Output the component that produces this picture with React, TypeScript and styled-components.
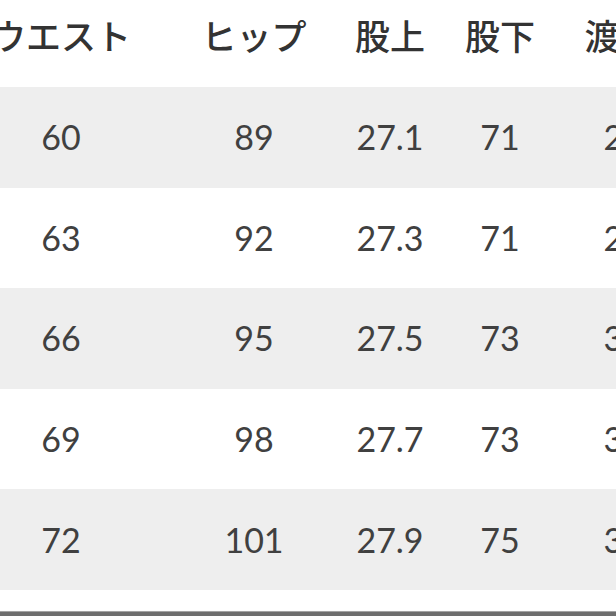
import React from 'react';
import styled, { createGlobalStyle } from 'styled-components';

const GlobalStyle = createGlobalStyle`
  html, body {
    margin: 0;
    padding: 0;
    background: #ffffff;
  }
`;

const Frame = styled.div`
  width: 616px;
  height: 616px;
  overflow: hidden;
  background: #ffffff;
  display: flex;
  flex-direction: column;
`;

const Table = styled.table`
  margin-left: -40px;
  border-collapse: collapse;
  table-layout: fixed;
  width: 748px;
  flex-shrink: 0;
`;

const HeadCell = styled.th`
  height: 87px;
  padding: 0 0 35px 0;
  box-sizing: border-box;
  font-family: 'Noto Sans CJK JP', 'Noto Sans', sans-serif;
  font-weight: 500;
  font-size: 35px;
  line-height: 1;
  color: #333333;
  text-align: center;
  white-space: nowrap;
  vertical-align: bottom;
`;

const Row = styled.tr<{ $shaded: boolean }>`
  height: 100.6px;
  background: ${(p) => (p.$shaded ? '#eeeeee' : '#ffffff')};
`;

const Cell = styled.td`
  padding: 0;
  font-family: Lato, 'Liberation Sans', sans-serif;
  font-weight: 400;
  font-size: 34px;
  line-height: 1;
  color: #404040;
  text-align: center;
  vertical-align: middle;
  white-space: nowrap;
`;

const Gap = styled.div`
  height: 21px;
  flex-shrink: 0;
`;

const BottomRule = styled.div`
  height: 4px;
  border-top: 1px solid #a4a4a4;
  background: #6e6e6e;
  flex-shrink: 0;
`;

const columns = [202, 184, 88, 132, 142];
const headers = ['ウエスト', 'ヒップ', '股上', '股下', '渡り幅'];
const rows = [
  ['60', '89', '27.1', '71', '25.5'],
  ['63', '92', '27.3', '71', '26.5'],
  ['66', '95', '27.5', '73', '30.5'],
  ['69', '98', '27.7', '73', '31.5'],
  ['72', '101', '27.9', '75', '32.5'],
];

export default function App() {
  return (
    <Frame>
      <GlobalStyle />
      <Table>
        <colgroup>
          {columns.map((w, i) => (
            <col key={i} style={{ width: w }} />
          ))}
        </colgroup>
        <thead>
          <tr>
            {headers.map((h) => (
              <HeadCell key={h}>{h}</HeadCell>
            ))}
          </tr>
        </thead>
        <tbody>
          {rows.map((r, i) => (
            <Row key={i} $shaded={i % 2 === 0}>
              {r.map((v, j) => (
                <Cell key={j}>{v}</Cell>
              ))}
            </Row>
          ))}
        </tbody>
      </Table>
      <Gap />
      <BottomRule />
    </Frame>
  );
}
